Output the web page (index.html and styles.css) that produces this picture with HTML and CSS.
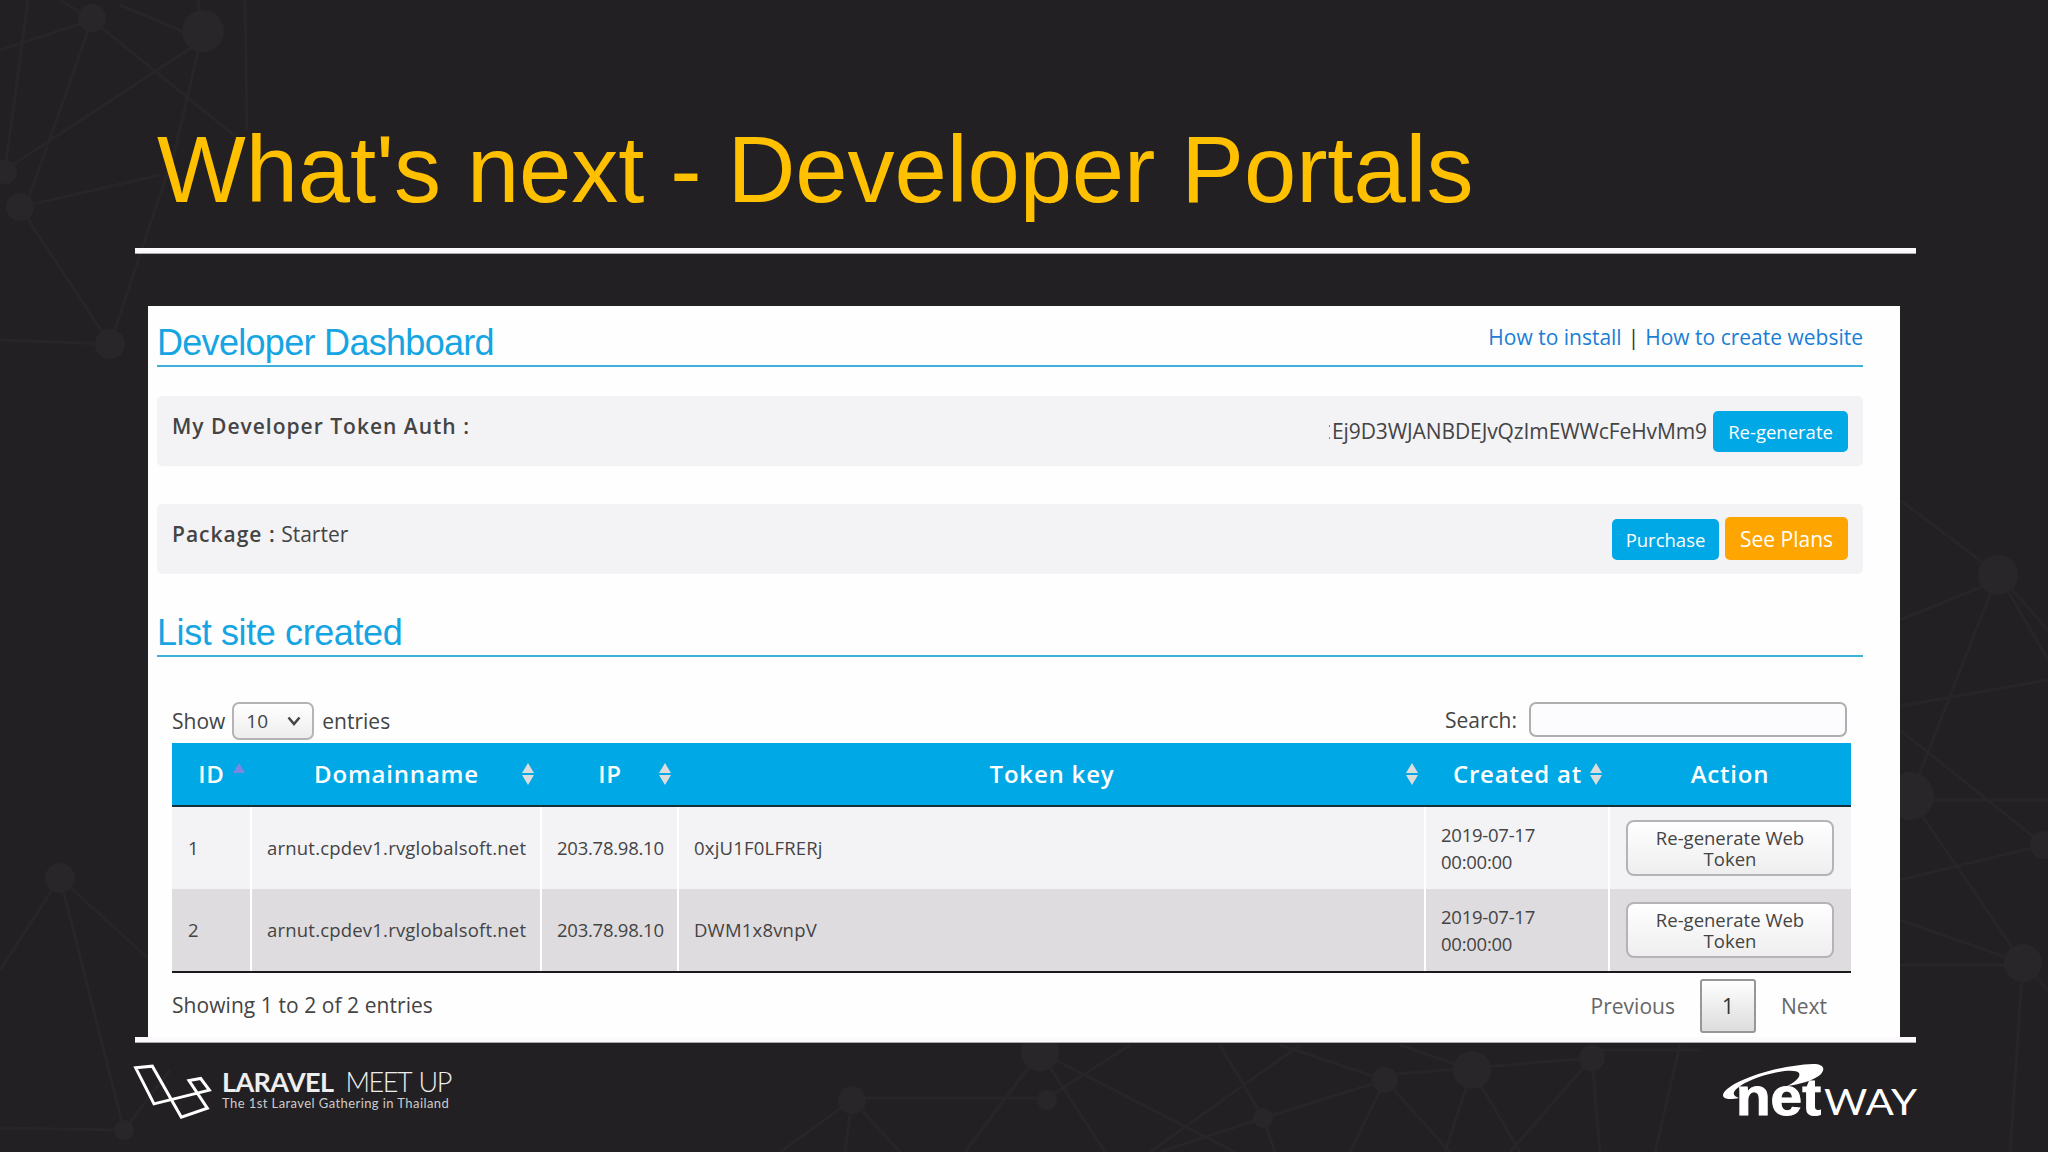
FILE: index.html
```html
<!DOCTYPE html>
<html lang="en">
<head>
    <meta charset="UTF-8">
    <meta name="viewport" content="width=device-width, initial-scale=1.0">
    <title>What's next - Developer Portals</title>
    <link rel="stylesheet" href="styles.css">
</head>
<body>
    <div class="slide">
        <svg class="network" viewBox="0 0 2048 1152">
            <g class="lines">
                <path d="M0 50L92 20L60 0M92 20L28 200M92 20L240 140M28 0L5 170L203 40L120 5M203 30L175 150L110 344L20 207L160 175M245 0L247 130M0 340L110 344M198 0L203 30"/>
                <path d="M0 970L60 878L124 1130L0 1128M60 878L150 960M124 1130L170 1070"/>
                <path d="M1900 500L1998 574L2048 660M1998 574L2048 630M1998 574L1910 798L2023 963M1900 620L1998 580M1900 706L2048 680M1900 730L2044 845L1900 880M1910 800H2048M1900 920L2023 963L2048 990M2023 963L2010 1152M1900 965H2023"/>
                <path d="M780 1152L852 1100L900 1152M852 1100L845 1152M852 1098H1047L1130 1045M1040 1052L965 1152M1040 1052L1105 1152M1040 1052L1235 1152M1160 1152L1263 1118L1385 1080L1350 1152M1300 1045L1150 1152M1220 1045L1263 1118L1275 1152M1280 1045L1385 1080L1450 1152M1385 1075L1592 1058L1510 1152M1400 1045L1472 1070L1445 1152M1472 1070L1520 1152M1592 1058L1600 1152M1680 1045L1655 1152M1592 1050H1700"/>
            </g>
            <g class="nodes">
                <circle cx="92" cy="18" r="14"/><circle cx="203" cy="31" r="21"/><circle cx="5" cy="172" r="12"/>
                <circle cx="20" cy="207" r="14"/><circle cx="110" cy="344" r="15"/><circle cx="60" cy="878" r="15"/>
                <circle cx="124" cy="1130" r="10"/><circle cx="1998" cy="575" r="20"/><circle cx="1910" cy="796" r="24"/>
                <circle cx="2044" cy="845" r="14"/><circle cx="2023" cy="963" r="19"/><circle cx="852" cy="1100" r="14"/>
                <circle cx="1040" cy="1052" r="19"/><circle cx="1047" cy="1100" r="10"/><circle cx="1263" cy="1118" r="10"/>
                <circle cx="1385" cy="1080" r="13"/><circle cx="1472" cy="1070" r="19"/><circle cx="1592" cy="1058" r="13"/>
            </g>
        </svg>
        <h1>What's next - Developer Portals</h1>
        <div class="rule"></div>
        <div class="panel">
            <div class="heading">
                <h2>Developer Dashboard</h2>
                <div class="links"><a>How to install</a><span class="bar">|</span><a>How to create website</a></div>
            </div>
            <div class="box">
                <div class="label"><b>My Developer Token Auth :</b></div>
                <div class="actions">
                    <span class="token"><i></i>Ej9D3WJANBDEJvQzImEWWcFeHvMm9</span>
                    <button class="btn regenerate">Re-generate</button>
                </div>
            </div>
            <div class="box">
                <div class="label"><b>Package :</b> Starter</div>
                <div class="actions">
                    <button class="btn purchase">Purchase</button>
                    <button class="btn plans">See Plans</button>
                </div>
            </div>
            <div class="heading">
                <h2 class="list-title">List site created</h2>
            </div>
            <div class="controls">
                <div class="length">Show
                    <span class="select">10<svg width="14" height="10" viewBox="0 0 14 10"><path d="M1.5 1.5L7 8L12.5 1.5"/></svg></span>
                    entries</div>
                <div class="search">Search:<input type="text"></div>
            </div>
            <table>
                <colgroup>
                    <col class="c-id"><col class="c-domain"><col class="c-ip"><col class="c-key"><col class="c-date"><col class="c-action">
                </colgroup>
                <thead>
                    <tr>
                        <th>ID<svg class="sort asc" viewBox="0 0 12 22"><path d="M6 0L12 10H0Z"/></svg></th>
                        <th>Domainname<svg class="sort" viewBox="0 0 12 22"><path d="M6 0L12 10H0ZM0 12H12L6 22Z"/></svg></th>
                        <th>IP<svg class="sort" viewBox="0 0 12 22"><path d="M6 0L12 10H0ZM0 12H12L6 22Z"/></svg></th>
                        <th>Token key<svg class="sort" viewBox="0 0 12 22"><path d="M6 0L12 10H0ZM0 12H12L6 22Z"/></svg></th>
                        <th>Created at<svg class="sort" viewBox="0 0 12 22"><path d="M6 0L12 10H0ZM0 12H12L6 22Z"/></svg></th>
                        <th>Action</th>
                    </tr>
                </thead>
                <tbody>
                    <tr>
                        <td class="id">1</td>
                        <td class="wide">arnut.cpdev1.rvglobalsoft.net</td>
                        <td>203.78.98.10</td>
                        <td class="wide">0xjU1F0LFRERj</td>
                        <td class="date">2019-07-17<br>00:00:00</td>
                        <td><button class="web-token">Re-generate Web<br>Token</button></td>
                    </tr>
                    <tr>
                        <td class="id">2</td>
                        <td class="wide">arnut.cpdev1.rvglobalsoft.net</td>
                        <td>203.78.98.10</td>
                        <td class="wide">DWM1x8vnpV</td>
                        <td class="date">2019-07-17<br>00:00:00</td>
                        <td><button class="web-token">Re-generate Web<br>Token</button></td>
                    </tr>
                </tbody>
            </table>
            <div class="table-footer">
                <div class="info">Showing 1 to 2 of 2 entries</div>
                <div class="pager"><span>Previous</span><span class="current">1</span><span>Next</span></div>
            </div>
        </div>
        <div class="rule"></div>
        <div class="footer">
            <div class="laravel">
                <svg class="laravel-icon" viewBox="40 100 240 170">
                    <path d="M48 114L98 109L185 262L263 235L208 152L243 146L269 181L103 222Z"/>
                </svg>
                <div class="laravel-text">
                    <div class="name"><b>LARAVEL</b><span>MEET UP</span></div>
                    <div class="tagline">The 1st Laravel Gathering in Thailand</div>
                </div>
            </div>
            <svg class="netway" viewBox="0 0 200 72">
                <path d="M18 37C8 39 2 38 2 34C4 23 48 5 92 3C103 3 105 8 99 14C93 19 80 23 66 25C74 21 80 16 78 12C74 7 46 11 24 22C12 29 9 34 18 37Z"/>
                <text class="net" x="15" y="54" textLength="85" lengthAdjust="spacingAndGlyphs">net</text>
                <text class="way" x="103" y="54" textLength="93" lengthAdjust="spacingAndGlyphs">WAY</text>
            </svg>
        </div>
    </div>
</body>
</html>
```

FILE: styles.css
```css
* {
    box-sizing: border-box;
}
body {
    margin: 0;
    background: #232023;
    color: #444;
    font-family: "Open Sans", "Noto Sans", sans-serif;
    font-size: 21px;
}
.slide {
    position: relative;
    width: 2048px;
    height: 1152px;
    padding: 114px 132px 0 135px;
    overflow: hidden;
}
.network {
    position: absolute;
    left: 0;
    top: 0;
    width: 2048px;
    height: 1152px;
    z-index: -1;
}
.lines {
    fill: none;
    stroke: #282528;
    stroke-width: 3;
}
.nodes {
    fill: #282629;
}
h1 {
    margin: 0 0 22px;
    padding-left: 22px;
    height: 112px;
    line-height: 112px;
    font-family: "Liberation Sans", Arial, sans-serif;
    font-weight: normal;
    font-size: 94px;
    letter-spacing: -0.08px;
    color: #ffc000;
    white-space: nowrap;
}
.rule {
    height: 6px;
    background: #fbf9fb;
    border-bottom: 1px solid #aaa;
}
.panel {
    width: 1752px;
    height: 731px;
    margin: 52px 0 0 13px;
    padding: 0 37px 0 9px;
    background: #fefefe;
}
.heading {
    display: flex;
    justify-content: space-between;
    height: 61px;
    border-bottom: 2px solid #3fb0d8;
    line-height: 62px;
}
h2 {
    margin: 0;
    padding-top: 6px;
    font-family: "Liberation Sans", Arial, sans-serif;
    font-weight: normal;
    font-size: 36px;
    line-height: 61px;
    letter-spacing: -0.7px;
    color: #15a5e2;
}
.list-title {
    letter-spacing: -0.4px;
}
.links {
    color: #333;
}
.links a {
    color: #1a7fd4;
}
.bar {
    margin: 0 6px;
}
.box {
    display: flex;
    justify-content: space-between;
    height: 70px;
    margin-top: 29px;
    padding: 0 15px;
    border-radius: 5px;
    background: #f3f2f4;
}
.box + .box {
    margin-top: 38px;
}
.label {
    line-height: 61px;
}
.label b {
    font-weight: 600;
    letter-spacing: 1px;
}
.actions {
    display: flex;
    align-items: flex-end;
    gap: 6px;
    padding-bottom: 14px;
}
.token {
    line-height: 41px;
    letter-spacing: -0.1px;
}
.token i {
    display: inline-block;
    width: 1px;
    height: 14px;
    margin-right: 2px;
    border-top: 2px solid #888;
    border-bottom: 2px solid #888;
}
.btn {
    height: 41px;
    padding: 0;
    border: none;
    border-radius: 5px;
    background: #00a8e6;
    color: white;
    font-family: inherit;
    font-size: 18.5px;
}
.regenerate {
    width: 135px;
}
.purchase {
    width: 107px;
}
.plans {
    width: 123px;
    height: 43px;
    background: #ffa500;
    font-size: 21px;
}
.box + .heading {
    margin-top: 22px;
}
.controls {
    display: flex;
    justify-content: space-between;
    height: 86px;
    padding: 45px 16px 0 15px;
}
.length, .search {
    display: flex;
    height: 38px;
    line-height: 38px;
}
.select {
    display: flex;
    align-items: center;
    justify-content: space-between;
    width: 82px;
    height: 38px;
    margin: 0 8px 0 7px;
    padding: 0 11px 0 12px;
    border: 2px solid #b5b3b5;
    border-radius: 7px;
    background: linear-gradient(#fff, #eeedee);
    font-size: 19px;
}
.select path {
    fill: none;
    stroke: #444;
    stroke-width: 2.5;
}
.search {
    line-height: 36px;
}
.search input {
    width: 318px;
    height: 35px;
    margin-left: 12px;
    border: 2px solid #b0aeb1;
    border-radius: 7px;
    background: #fcfbfd;
}
table {
    width: 1679px;
    margin-left: 15px;
    border-collapse: separate;
    border-spacing: 0;
    table-layout: fixed;
    border-bottom: 2px solid #1c1a1d;
}
.c-id {
    width: 80px;
}
.c-domain {
    width: 290px;
}
.c-ip {
    width: 137px;
}
.c-key {
    width: 747px;
}
.c-date {
    width: 184px;
}
.c-action {
    width: 241px;
}
th {
    position: relative;
    height: 64px;
    padding: 0 24px 2px 23px;
    background: #00a8e6;
    border-bottom: 2px solid #17303c;
    color: white;
    font-weight: 600;
    font-size: 24px;
    letter-spacing: 0.8px;
    white-space: nowrap;
}
.sort {
    position: absolute;
    right: 8px;
    top: 20px;
    width: 12px;
    height: 22px;
    fill: #dcdcdc;
}
.asc {
    right: 7px;
    fill: #7b87e0;
}
td {
    height: 82px;
    padding: 0 15px 2px;
    background: #f3f2f4;
    border-right: 2px solid #fff;
    font-size: 18.5px;
    letter-spacing: -0.25px;
    white-space: nowrap;
}
td:last-child {
    padding: 0 16px;
    border-right: none;
}
tbody tr:last-child td {
    background: #dedcde;
}
.id {
    padding-left: 16px;
}
.wide {
    letter-spacing: 0.2px;
}
.date {
    padding-bottom: 0;
    line-height: 27px;
}
.web-token {
    display: block;
    width: 208px;
    height: 56px;
    padding: 0;
    border: 2px solid #b5b3b5;
    border-radius: 8px;
    background: linear-gradient(#fff, #efeeef);
    color: #444;
    font-family: inherit;
    font-size: 18.5px;
    line-height: 21px;
}
.table-footer {
    display: flex;
    justify-content: space-between;
    padding: 6px 16px 0 15px;
}
.info {
    line-height: 52px;
    letter-spacing: 0.06px;
}
.pager {
    display: flex;
    line-height: 55px;
    color: #666;
    padding-right: 20px;
}
.current {
    width: 56px;
    height: 54px;
    margin: 0 25px;
    border: 2px solid #979797;
    border-radius: 3px;
    background: linear-gradient(#fff, #dcdcdc);
    color: #333;
    line-height: 51px;
    text-align: center;
}
.footer {
    display: flex;
    justify-content: space-between;
    padding-top: 20px;
}
.laravel {
    display: flex;
}
.laravel-icon {
    width: 80px;
    height: 57px;
    margin-left: -2px;
}
.laravel-icon path {
    fill: none;
    stroke: #fff;
    stroke-width: 9;
}
.laravel-text {
    padding: 6px 0 0 9px;
    color: #eee;
    white-space: nowrap;
}
.name {
    display: flex;
    gap: 12px;
    height: 26px;
    font-family: Lato, sans-serif;
    font-size: 27px;
    line-height: 26px;
}
.name b {
    letter-spacing: -0.6px;
}
.name span {
    font-weight: 300;
    letter-spacing: -1.4px;
    word-spacing: 2px;
}
.tagline {
    font-family: Lato, sans-serif;
    font-size: 13px;
    line-height: 17px;
    letter-spacing: 0.42px;
    color: #ccc;
}
.netway {
    width: 200px;
    height: 72px;
    margin: -2px -5px 0 0;
    fill: #fff;
}
.net {
    font-family: "Liberation Sans", Arial, sans-serif;
    font-weight: bold;
    font-size: 51px;
    stroke: #fff;
    stroke-width: 1;
}
.way {
    font-family: Lato, sans-serif;
    font-size: 36px;
}
```
